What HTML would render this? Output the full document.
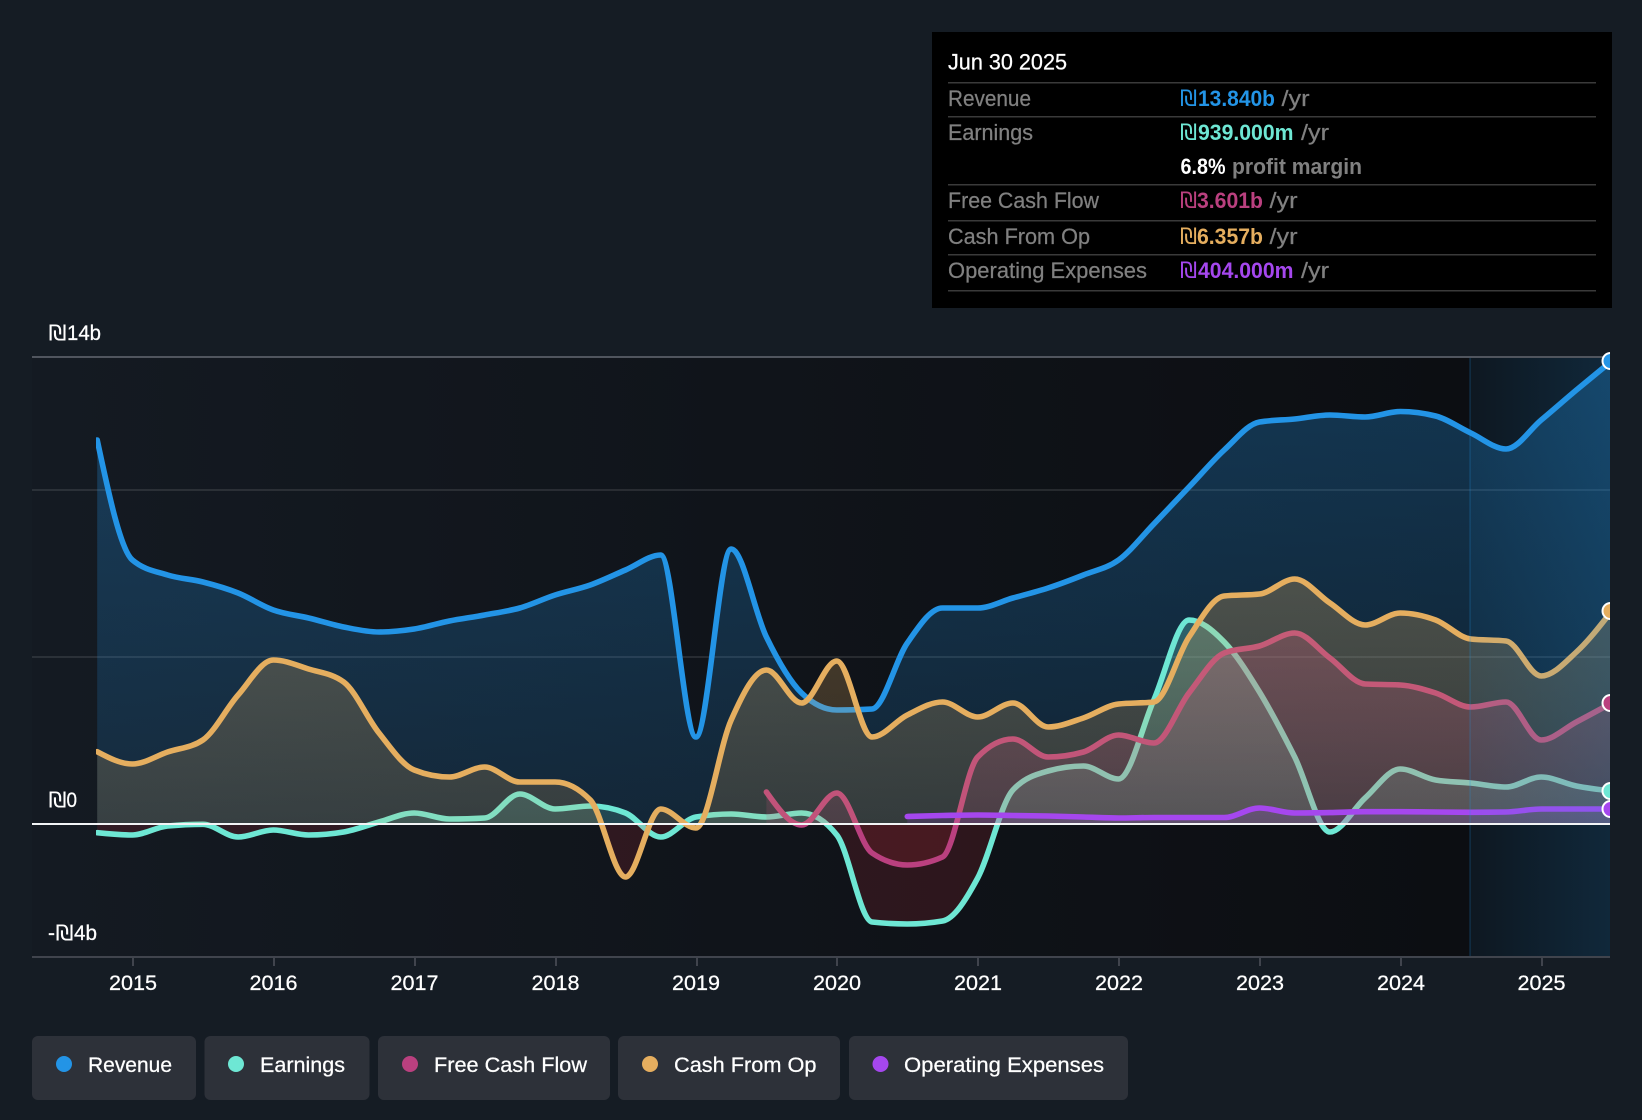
<!DOCTYPE html>
<html><head><meta charset="utf-8">
<style>
html,body{margin:0;padding:0;background:#151c24;width:1642px;height:1120px;overflow:hidden}
svg{display:block;font-family:"Liberation Sans","DejaVu Sans",sans-serif}
.sh{font-family:"DejaVu Sans",sans-serif;font-weight:400;stroke:none}
</style></head>
<body>
<svg id="c" width="1642" height="1120" viewBox="0 0 1642 1120" xmlns="http://www.w3.org/2000/svg">
<defs>
<linearGradient id="bg" gradientUnits="userSpaceOnUse" x1="32" y1="0" x2="1470" y2="0"><stop offset="0" stop-color="#141a22"/><stop offset="1" stop-color="#0c0e12"/></linearGradient>
<linearGradient id="over" gradientUnits="userSpaceOnUse" x1="1470" y1="0" x2="1610" y2="0"><stop offset="0" stop-color="#2196e6" stop-opacity=".07"/><stop offset="1" stop-color="#2196e6" stop-opacity=".19"/></linearGradient>
<linearGradient id="gr" gradientUnits="userSpaceOnUse" x1="0" y1="357" x2="0" y2="824"><stop offset="0" stop-color="#2394e6" stop-opacity=".3"/><stop offset="1" stop-color="#2394e6" stop-opacity=".14"/></linearGradient>
<linearGradient id="ge" gradientUnits="userSpaceOnUse" x1="0" y1="600" x2="0" y2="824"><stop offset="0" stop-color="#6ee7d4" stop-opacity=".3"/><stop offset="1" stop-color="#6ee7d4" stop-opacity=".16"/></linearGradient>
<linearGradient id="gf" gradientUnits="userSpaceOnUse" x1="0" y1="620" x2="0" y2="824"><stop offset="0" stop-color="#ba407f" stop-opacity=".32"/><stop offset="1" stop-color="#ba407f" stop-opacity=".16"/></linearGradient>
<linearGradient id="gc" gradientUnits="userSpaceOnUse" x1="0" y1="570" x2="0" y2="824"><stop offset="0" stop-color="#e5ae5f" stop-opacity=".28"/><stop offset="1" stop-color="#e5ae5f" stop-opacity=".16"/></linearGradient>
<linearGradient id="go" gradientUnits="userSpaceOnUse" x1="0" y1="800" x2="0" y2="824"><stop offset="0" stop-color="#a547ee" stop-opacity=".2"/><stop offset="1" stop-color="#a547ee" stop-opacity=".15"/></linearGradient>
<clipPath id="up"><rect x="32" y="300" width="1578" height="524"/></clipPath>
<clipPath id="dn"><rect x="32" y="824" width="1578" height="134"/></clipPath>
<clipPath id="pl"><rect x="96" y="340" width="1514" height="620"/></clipPath>
</defs>

<rect x="32" y="357" width="1578" height="600" fill="url(#bg)"/>
<rect x="32" y="489" width="1578" height="2" fill="#fff" fill-opacity=".1"/>
<rect x="32" y="656" width="1578" height="2" fill="#fff" fill-opacity=".1"/>
<g id="series" clip-path="url(#pl)"></g>
<rect x="1469" y="357" width="2" height="600" fill="#2196e6" fill-opacity=".16"/>
<rect x="1470" y="357" width="140" height="600" fill="url(#over)"/>
<rect x="32" y="356" width="1578" height="2" fill="#50555e"/>
<rect x="32" y="823" width="1578" height="2" fill="#f2f4f6"/>
<rect x="32" y="956" width="1578" height="2" fill="#40444d"/>
<g id="dots" clip-path="url(#pl)"></g>

<g fill="#40444d">
<rect x="132" y="957" width="2" height="9"/><rect x="273" y="957" width="2" height="9"/><rect x="414" y="957" width="2" height="9"/><rect x="555" y="957" width="2" height="9"/><rect x="696" y="957" width="2" height="9"/><rect x="836" y="957" width="2" height="9"/><rect x="977" y="957" width="2" height="9"/><rect x="1118" y="957" width="2" height="9"/><rect x="1259" y="957" width="2" height="9"/><rect x="1400" y="957" width="2" height="9"/><rect x="1541" y="957" width="2" height="9"/>
</g>
<g fill="#fff" font-size="21.5" stroke="#fff" stroke-width=".25">
<text x="109" y="990" textLength="48" lengthAdjust="spacingAndGlyphs">2015</text>
<text x="249.5" y="990" textLength="48" lengthAdjust="spacingAndGlyphs">2016</text>
<text x="390.5" y="990" textLength="48" lengthAdjust="spacingAndGlyphs">2017</text>
<text x="531.5" y="990" textLength="48" lengthAdjust="spacingAndGlyphs">2018</text>
<text x="672" y="990" textLength="48" lengthAdjust="spacingAndGlyphs">2019</text>
<text x="813" y="990" textLength="48" lengthAdjust="spacingAndGlyphs">2020</text>
<text x="954" y="990" textLength="48" lengthAdjust="spacingAndGlyphs">2021</text>
<text x="1095" y="990" textLength="48" lengthAdjust="spacingAndGlyphs">2022</text>
<text x="1236" y="990" textLength="48" lengthAdjust="spacingAndGlyphs">2023</text>
<text x="1377" y="990" textLength="48" lengthAdjust="spacingAndGlyphs">2024</text>
<text x="1517.5" y="990" textLength="48" lengthAdjust="spacingAndGlyphs">2025</text>
<text class="sh" x="48.5" y="340" textLength="18" lengthAdjust="spacingAndGlyphs">₪</text>
<text x="67" y="340" textLength="34" lengthAdjust="spacingAndGlyphs">14b</text>
<text class="sh" x="48.5" y="807" textLength="18" lengthAdjust="spacingAndGlyphs">₪</text>
<text x="66.5" y="807" textLength="10.5" lengthAdjust="spacingAndGlyphs">0</text>
<text x="48" y="940" textLength="7" lengthAdjust="spacingAndGlyphs">-</text>
<text class="sh" x="55.5" y="940" textLength="18" lengthAdjust="spacingAndGlyphs">₪</text>
<text x="74" y="940" textLength="23" lengthAdjust="spacingAndGlyphs">4b</text>
</g>

<rect x="932" y="32" width="680" height="276" fill="#000"/>
<g fill="#3a3a3a">
<rect x="948" y="82" width="648" height="1.5"/><rect x="948" y="116" width="648" height="1.5"/><rect x="948" y="184" width="648" height="1.5"/><rect x="948" y="220" width="648" height="1.5"/><rect x="948" y="254" width="648" height="1.5"/><rect x="948" y="290" width="648" height="1.5"/>
</g>
<g font-size="22.5">
<text x="948" y="69.5" fill="#fff" stroke="#fff" stroke-width=".25" textLength="119" lengthAdjust="spacingAndGlyphs">Jun 30 2025</text>
<g fill="#808080" stroke="#808080" stroke-width=".25">
<text x="948" y="106" textLength="83" lengthAdjust="spacingAndGlyphs">Revenue</text>
<text x="948" y="140" textLength="85" lengthAdjust="spacingAndGlyphs">Earnings</text>
<text x="948" y="208" textLength="151" lengthAdjust="spacingAndGlyphs">Free Cash Flow</text>
<text x="948" y="244" textLength="142" lengthAdjust="spacingAndGlyphs">Cash From Op</text>
<text x="948" y="278" textLength="199" lengthAdjust="spacingAndGlyphs">Operating Expenses</text>
<text x="1281.5" y="106" textLength="28" lengthAdjust="spacingAndGlyphs">/yr</text>
<text x="1301" y="140" textLength="28" lengthAdjust="spacingAndGlyphs">/yr</text>
<text x="1232" y="174" textLength="130" lengthAdjust="spacingAndGlyphs" font-weight="700" stroke="none">profit margin</text>
<text x="1269.5" y="208" textLength="28" lengthAdjust="spacingAndGlyphs">/yr</text>
<text x="1269.5" y="244" textLength="28" lengthAdjust="spacingAndGlyphs">/yr</text>
<text x="1301" y="278" textLength="28" lengthAdjust="spacingAndGlyphs">/yr</text>
</g>
<g font-weight="700">
<g fill="#2394e6"><text class="sh" x="1180" y="106" textLength="17" lengthAdjust="spacingAndGlyphs">₪</text><text x="1198" y="106" textLength="77" lengthAdjust="spacingAndGlyphs">13.840b</text></g>
<g fill="#6ee7d4"><text class="sh" x="1180" y="140" textLength="17" lengthAdjust="spacingAndGlyphs">₪</text><text x="1198" y="140" textLength="95.5" lengthAdjust="spacingAndGlyphs">939.000m</text></g>
<text x="1180.5" y="174" fill="#fff" textLength="45" lengthAdjust="spacingAndGlyphs">6.8%</text>
<g fill="#ba407f"><text class="sh" x="1180" y="208" textLength="17" lengthAdjust="spacingAndGlyphs">₪</text><text x="1197" y="208" textLength="66" lengthAdjust="spacingAndGlyphs">3.601b</text></g>
<g fill="#e5ae5f"><text class="sh" x="1180" y="244" textLength="17" lengthAdjust="spacingAndGlyphs">₪</text><text x="1197" y="244" textLength="66" lengthAdjust="spacingAndGlyphs">6.357b</text></g>
<g fill="#a547ee"><text class="sh" x="1180" y="278" textLength="17" lengthAdjust="spacingAndGlyphs">₪</text><text x="1198" y="278" textLength="95.5" lengthAdjust="spacingAndGlyphs">404.000m</text></g>
</g>
</g>

<g fill="#2d3139">
<rect x="32" y="1036" width="164" height="64" rx="6"/>
<rect x="204.5" y="1036" width="165" height="64" rx="6"/>
<rect x="378" y="1036" width="232" height="64" rx="6"/>
<rect x="618" y="1036" width="222" height="64" rx="6"/>
<rect x="849" y="1036" width="279" height="64" rx="6"/>
</g>
<circle cx="64" cy="1064" r="8" fill="#2394e6"/>
<circle cx="236" cy="1064" r="8" fill="#6ee7d4"/>
<circle cx="410" cy="1064" r="8" fill="#ba407f"/>
<circle cx="650" cy="1064" r="8" fill="#e5ae5f"/>
<circle cx="880.5" cy="1064" r="8" fill="#a547ee"/>
<g fill="#fff" font-size="21.5" stroke="#fff" stroke-width=".25">
<text x="88" y="1072" textLength="84" lengthAdjust="spacingAndGlyphs">Revenue</text>
<text x="260" y="1072" textLength="85" lengthAdjust="spacingAndGlyphs">Earnings</text>
<text x="434" y="1072" textLength="153" lengthAdjust="spacingAndGlyphs">Free Cash Flow</text>
<text x="674" y="1072" textLength="142.5" lengthAdjust="spacingAndGlyphs">Cash From Op</text>
<text x="904" y="1072" textLength="200" lengthAdjust="spacingAndGlyphs">Operating Expenses</text>
</g>
</svg>
<script>
(function(){
var NS="http://www.w3.org/2000/svg",x0=97.2,st=35.22;
var S=[
{c:"#2394e6",g:"gr",s:0,y:[440,560,575,582,593,610,618,627,632,629,621,615,608,595,585,570,555,737,549,637,693,710,709,643,608,608,598,588,575,560,524,487,450,422,419,415,417,411.5,416,433,449,420,390,361]},
{c:"#6ee7d4",g:"ge",s:0,y:[832.7,835,826,824.3,837,830,835,832,822,813,819,818,794,809,806,813,837,817,814,817,813,835,922,924,921,878,790,771,766,779,700,620,642,692,757,832,798,769,780,783,787,777,786,791]},
{c:"#ba407f",g:"gf",s:19,y:[792,825,793,853,865,857,757,739,757,752,735,743,693,653,646,633,658,684,685,693,707,702,740,722,703]},
{c:"#e5ae5f",g:"gc",s:0,y:[751.7,764,752,740,695,660,669,682,733,770,777,767,782,782,800,877,809,828,720,670,703,661,737,715,702,717,703,727,718,704,702,637,596,594,579,603,625,613,620,639,641,676,652,611]},
{c:"#a547ee",g:"go",s:23,y:[816.5,815.5,815,815.5,816,817,818,817.5,817.5,817.5,808,813,812.6,811.7,811.7,812,812.3,812,809,809,809]}
];
function mono(p){
 var n=p.length,t=[],i,d="M"+p[0][0].toFixed(1)+" "+p[0][1].toFixed(1),h=st,s=[];
 for(i=0;i<n-1;i++)s[i]=(p[i+1][1]-p[i][1])/h;
 for(i=1;i<n-1;i++){var a=s[i-1],b=s[i],q=(a+b)/2;
  t[i]=(a*b<=0)?0:((a<0?-1:1))*Math.min(Math.abs(a),Math.abs(b),0.5*Math.abs(q))*2;}
 t[0]=(3*s[0]-t[1])/2;t[n-1]=(3*s[n-2]-t[n-2])/2;
 for(i=0;i<n-1;i++){d+="C"+(p[i][0]+h/3).toFixed(1)+" "+(p[i][1]+t[i]*h/3).toFixed(1)+" "+(p[i+1][0]-h/3).toFixed(1)+" "+(p[i+1][1]-t[i+1]*h/3).toFixed(1)+" "+p[i+1][0].toFixed(1)+" "+p[i+1][1].toFixed(1);}
 return d;
}
function el(n,a,par){var e=document.createElementNS(NS,n);for(var k in a)e.setAttribute(k,a[k]);par.appendChild(e);return e;}
var g=document.getElementById("series"),dg=document.getElementById("dots");
S.forEach(function(o){
 var p=o.y.map(function(v,i){return [x0+st*(i+o.s),v];});
 var d=mono(p),last=p[p.length-1],a=d+"L"+last[0].toFixed(1)+" 824L"+p[0][0].toFixed(1)+" 824Z";
 el("path",{d:a,fill:"url(#"+o.g+")","clip-path":"url(#up)"},g);
 el("path",{d:a,fill:"#dc323c","fill-opacity":".15","clip-path":"url(#dn)"},g);
 el("path",{d:d,fill:"none",stroke:o.c,"stroke-width":"5.6","stroke-linecap":"round","stroke-linejoin":"round"},g);
 el("circle",{cx:1610.5,cy:last[1],r:8,fill:o.c,stroke:"#fff","stroke-width":2},dg);
});
})();
</script>
</body></html>
